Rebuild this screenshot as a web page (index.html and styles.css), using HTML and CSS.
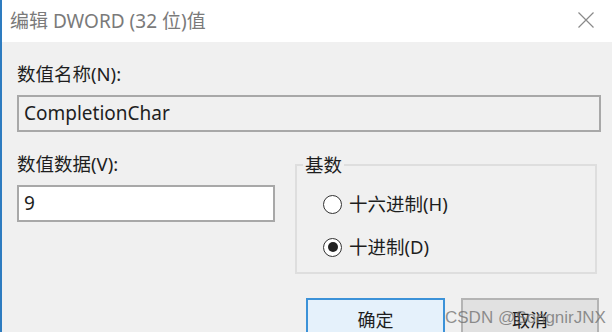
FILE: index.html
```html
<!DOCTYPE html>
<html lang="zh-CN">
<head>
<meta charset="utf-8">
<title>编辑 DWORD (32 位)值</title>
<link rel="stylesheet" href="styles.css">
</head>
<body>
<div class="window">
  <div class="titlebar">
    <span class="title">编辑 DWORD (32 位)值</span>
    <svg class="close" width="16" height="16" viewBox="0 0 16 16"><path d="M0.5 0.5 L15.5 15.5 M15.5 0.5 L0.5 15.5" stroke="#8a8a8a" stroke-width="1.2" fill="none"/></svg>
  </div>
  <div class="content">
    <div class="label first">数值名称(N):</div>
    <div class="field readonly">CompletionChar</div>
    <div class="row">
      <div class="col-left">
        <div class="label second">数值数据(V):</div>
        <div class="field value">9</div>
      </div>
      <fieldset class="group">
        <legend>基数</legend>
        <div class="radio r1"><span class="dot"></span><span>十六进制(H)</span></div>
        <div class="radio r2"><span class="dot checked"></span><span>十进制(D)</span></div>
      </fieldset>
    </div>
    <div class="buttons">
      <div class="btn ok">确定</div>
      <div class="btn cancel">取消</div>
    </div>
  </div>
  <div class="watermark">CSDN @SongnirJNX</div>
</div>
</body>
</html>
```
FILE: styles.css
```css
* { box-sizing: border-box; }
html, body { margin: 0; padding: 0; }
body {
  width: 612px;
  height: 332px;
  overflow: hidden;
  font-family: "Noto Sans", "Noto Sans CJK SC", sans-serif;
  color: #1e1e1e;
}
.window {
  position: relative;
  width: 612px;
  height: 332px;
  background: #f0f0f0;
  border-left: 2px solid #2e7cc0;
  overflow: hidden;
}
.titlebar {
  height: 42px;
  background: #ffffff;
  display: flex;
  align-items: center;
  justify-content: space-between;
  padding: 0 18px 2px 8px;
}
.title {
  font-size: 19px;
  color: #7a7a7a;
  font-family: "Noto Sans", "Noto Sans CJK SC", sans-serif;
}
.close { display: block; }
.content {
  padding: 0 11px 0 15px;
}
.label {
  font-size: 18.5px;
  line-height: 22px;
  height: 22px;
}
.label.first { margin-top: 21px; }
.field {
  height: 37px;
  border: 2px solid #a8a8a8;
  font-size: 19px;
  line-height: 33px;
  padding-left: 5px;
  margin-top: 10px;
}
.field.readonly { background: #f0f0f0; }
.field.value { background: #ffffff; width: 258px; margin-top: 10px; }
.row {
  display: flex;
  gap: 20px;
}
.col-left { width: 258px; padding-top: 21px; }
.group {
  margin: 22px 0 0 0;
  padding: 0;
  width: 302px;
  height: 120px;
  border: 2px solid #dedede;
  min-width: 0;
}
.group legend {
  font-size: 18.5px;
  line-height: 22px;
  padding: 0 2px;
  margin-left: 6px;
}
.radio {
  display: flex;
  align-items: center;
  gap: 7px;
  font-size: 18.5px;
  line-height: 22px;
  padding-left: 26px;
}
.radio.r1 { margin-top: 17px; }
.radio.r2 { margin-top: 21px; }
.dot {
  width: 19px;
  height: 19px;
  border: 1.5px solid #333;
  border-radius: 50%;
  background: #fff;
  display: flex;
  align-items: center;
  justify-content: center;
}
.dot.checked::after {
  content: "";
  width: 10px;
  height: 10px;
  border-radius: 50%;
  background: #222;
}
.buttons {
  display: flex;
  justify-content: flex-end;
  gap: 16px;
  margin-top: 24px;
  padding-right: 2px;
}
.btn {
  width: 139px;
  height: 44px;
  font-size: 18px;
  line-height: 40px;
  text-align: center;
}
.btn.ok {
  background: #e5f1fb;
  border: 2px solid #3c92d8;
}
.btn.cancel {
  background: #e1e1e1;
  border: 2px solid #b4b4b4;
  width: 138px;
}
.watermark {
  position: absolute;
  left: 443px;
  top: 308px;
  font-family: "Liberation Sans", "Noto Sans", sans-serif;
  font-size: 17px;
  color: rgba(110, 110, 110, 0.75);
}
```
